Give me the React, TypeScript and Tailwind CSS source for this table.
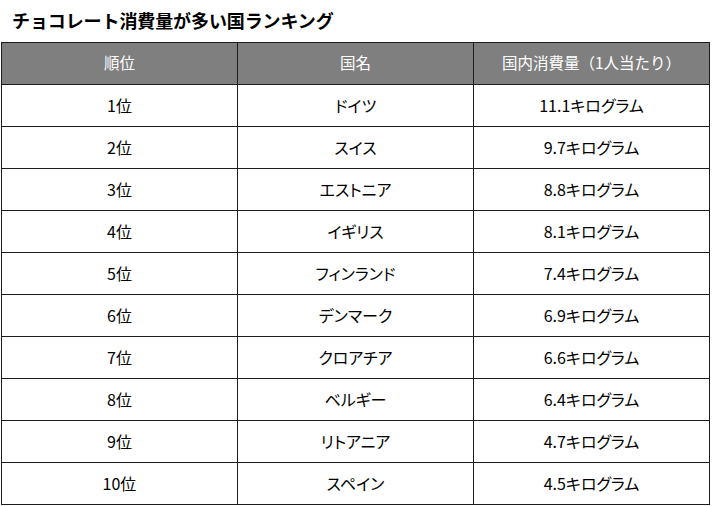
const rows: [string, string, string][] = [
  ["1位", "ドイツ", "11.1キログラム"],
  ["2位", "スイス", "9.7キログラム"],
  ["3位", "エストニア", "8.8キログラム"],
  ["4位", "イギリス", "8.1キログラム"],
  ["5位", "フィンランド", "7.4キログラム"],
  ["6位", "デンマーク", "6.9キログラム"],
  ["7位", "クロアチア", "6.6キログラム"],
  ["8位", "ベルギー", "6.4キログラム"],
  ["9位", "リトアニア", "4.7キログラム"],
  ["10位", "スペイン", "4.5キログラム"],
];

export default function App() {
  return (
    <div className="w-[712px] h-[506px] bg-white text-black font-['Noto_Sans_CJK_JP','Noto_Sans',sans-serif]">
      {/* Title */}
      <div className="h-[42px] flex items-center pl-[12px] pb-[2px]">
        <h1 className="text-[18px] font-bold leading-none tracking-[-0.1px]">
          チョコレート消費量が多い国ランキング
        </h1>
      </div>

      {/* Ranking table */}
      <div className="pl-[1px]">
        <table className="w-[709px] border-collapse table-fixed">
          <thead>
            <tr className="h-[42px] bg-[#7f7f7f] text-white text-[15.5px]">
              <th className="font-normal pb-[2px] border-[1.5px] border-[#1c1c1c]">順位</th>
              <th className="font-normal pb-[2px] border-[1.5px] border-[#1c1c1c]">国名</th>
              <th className="font-normal pb-[2px] border-[1.5px] border-[#1c1c1c]">国内消費量（1人当たり）</th>
            </tr>
          </thead>
          <tbody className="text-[16px] [font-feature-settings:'palt']">
            {rows.map(([rank, country, amount]) => (
              <tr key={rank} className="h-[42px]">
                <td className="text-center pb-[2px] border-[1.5px] border-[#1c1c1c]">{rank}</td>
                <td className="text-center pb-[2px] border-[1.5px] border-[#1c1c1c]">{country}</td>
                <td className="text-center pb-[2px] border-[1.5px] border-[#1c1c1c]">{amount}</td>
              </tr>
            ))}
          </tbody>
        </table>
      </div>
    </div>
  );
}
